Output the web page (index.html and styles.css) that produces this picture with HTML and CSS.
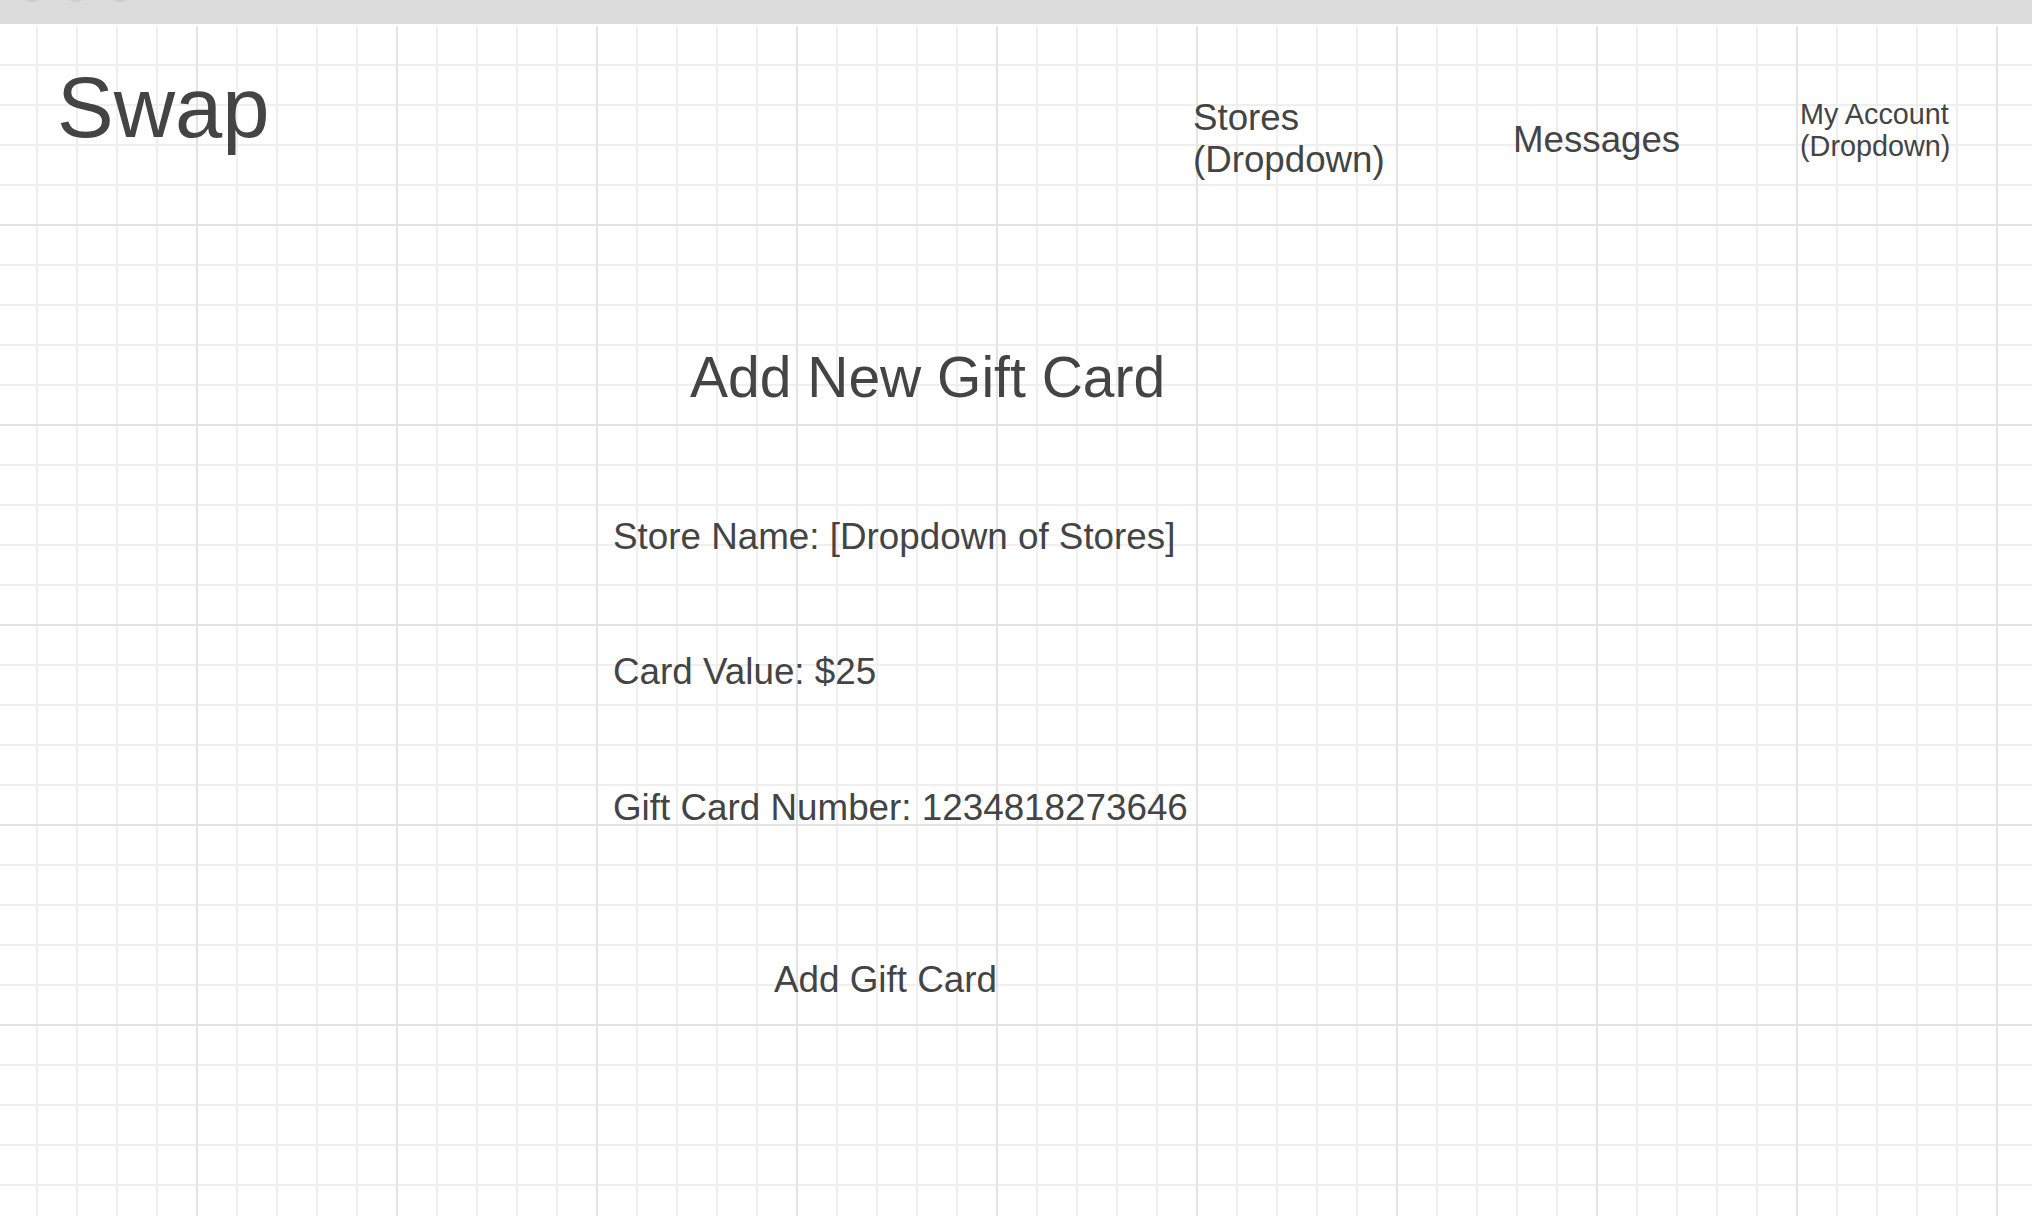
FILE: index.html
```html
<!DOCTYPE html>
<html lang="en">
<head>
<meta charset="utf-8">
<title>Swap - Add New Gift Card</title>
<link rel="stylesheet" href="styles.css">
</head>
<body>
<div class="titlebar">
  <span class="dot"></span>
  <span class="dot"></span>
  <span class="dot"></span>
</div>
<div class="canvas">
  <header class="header">
    <div class="logo">Swap</div>
    <nav class="nav">
      <div class="nav-item nav-stores">Stores<br>(Dropdown)</div>
      <div class="nav-item nav-messages">Messages</div>
      <div class="nav-item nav-account">My Account<br>(Dropdown)</div>
    </nav>
  </header>
  <main class="form">
    <h1 class="form-title">Add New Gift Card</h1>
    <div class="field field-store">Store Name: [Dropdown of Stores]</div>
    <div class="field field-value">Card Value: $25</div>
    <div class="field field-number">Gift Card Number: 1234818273646</div>
    <div class="submit">Add Gift Card</div>
  </main>
</div>
</body>
</html>
```
FILE: styles.css
```css
html, body {
  margin: 0;
  padding: 0;
}

body {
  width: 2032px;
  height: 1216px;
  overflow: hidden;
  background: #ffffff;
  color: #444444;
  font-family: "Liberation Sans", Arial, sans-serif;
}

.titlebar {
  height: 24px;
  background: #dcdcdc;
  display: flex;
  gap: 20px;
  padding-left: 20px;
  overflow: hidden;
}

.dot {
  width: 24px;
  height: 24px;
  margin-top: -22px;
  border-radius: 50%;
  background: #cecece;
  flex: none;
}

.canvas {
  height: 1190px;
  border-top: 2px solid #ffffff;
  background-color: #ffffff;
  background-image:
    linear-gradient(to right, #e3e3e3 2px, transparent 2px),
    linear-gradient(to bottom, #e3e3e3 2px, transparent 2px),
    linear-gradient(to right, #efefef 2px, transparent 2px),
    linear-gradient(to bottom, #efefef 2px, transparent 2px);
  background-size: 200px 200px, 200px 200px, 40px 40px, 40px 40px;
  background-position: -4px -2px;
}

.header {
  height: 199px;
  display: flex;
  align-items: flex-start;
  padding-right: 32px;
}

.logo {
  margin-left: 57px;
  margin-top: 35px;
  font-size: 85px;
  line-height: 94px;
}

.nav {
  margin-left: auto;
  display: flex;
  align-items: flex-start;
}

.nav-item {
  font-size: 36.7px;
  line-height: 42px;
}

.nav-stores {
  width: 320px;
  margin-top: 71px;
}

.nav-messages {
  width: 287px;
  margin-top: 93px;
}

.nav-account {
  width: 200px;
  margin-top: 72px;
  font-size: 28.8px;
  line-height: 32px;
}

.form {
  display: flex;
  flex-direction: column;
  align-items: flex-start;
  padding-left: 613px;
}

.form-title {
  margin: 120px 0 0 77px;
  font-size: 57px;
  font-weight: normal;
  line-height: 64px;
}

.field {
  font-size: 36.8px;
  line-height: 42px;
}

.field-store {
  margin-top: 107px;
}

.field-value {
  margin-top: 93px;
}

.field-number {
  margin-top: 94px;
}

.submit {
  margin-top: 130px;
  margin-left: 161px;
  font-size: 36.8px;
  line-height: 42px;
}
```
